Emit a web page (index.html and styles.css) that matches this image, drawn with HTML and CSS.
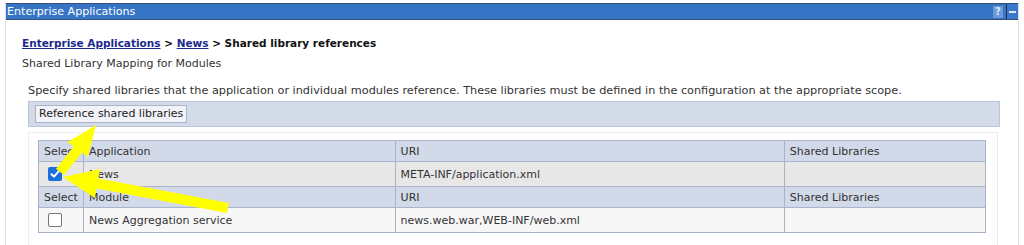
FILE: index.html
```html
<!DOCTYPE html>
<html>
<head>
<meta charset="utf-8">
<link rel="stylesheet" href="styles.css">
</head>
<body>
<div class="page">
  <div class="titlebar">
    <span class="title">Enterprise Applications</span>
    <div class="tools">
      <span class="help">?</span>
      <span class="min"></span>
    </div>
  </div>
  <div class="content">
    <div class="breadcrumb"><a href="#">Enterprise Applications</a> &gt; <a href="#">News</a> &gt; Shared library references</div>
    <div class="subtitle">Shared Library Mapping for Modules</div>
    <div class="section">
      <div class="desc">Specify shared libraries that the application or individual modules reference. These libraries must be defined in the configuration at the appropriate scope.</div>
      <div class="buttonbar"><button class="btn">Reference shared libraries</button></div>
      <div class="tablebox">
        <table class="grid">
          <colgroup><col class="c-sel"><col class="c-name"><col class="c-uri"><col class="c-lib"></colgroup>
          <tr class="head"><td>Select</td><td>Application</td><td>URI</td><td>Shared Libraries</td></tr>
          <tr class="row1"><td class="sel"><span class="cb checked"><svg viewBox="0 0 14 14" width="14" height="14"><path d="M3.5 7.2 L6 9.6 L10.6 4.4" fill="none" stroke="#fff" stroke-width="2" stroke-linecap="round" stroke-linejoin="round"/></svg></span></td><td>News</td><td>META-INF/application.xml</td><td></td></tr>
          <tr class="head"><td>Select</td><td>Module</td><td>URI</td><td>Shared Libraries</td></tr>
          <tr class="row2"><td class="sel"><span class="cb"></span></td><td>News Aggregation service</td><td>news.web.war,WEB-INF/web.xml</td><td></td></tr>
        </table>
      </div>
    </div>
  </div>
  <svg class="arrows" width="1024" height="245" viewBox="0 0 1024 245">
    <polygon fill="#ffff00" points="96,125 87.8,157 82,152.6 64,175 56,169 73.6,146.4 67.8,142"/>
    <polygon fill="#ffff00" points="63,177 100,169 98.3,178.6 228.9,203.1 227.1,212.9 96.5,188.4 94.8,198"/>
  </svg>
</div>
</body>
</html>
```
FILE: styles.css
```css
html, body {
  margin: 0;
  padding: 0;
  background: #fff;
}
body {
  font-family: "DejaVu Sans", Verdana, sans-serif;
  font-size: 11px;
  color: #222;
  height: 245px;
  overflow: hidden;
}
.page {
  position: relative;
  margin: 3px 5px 0 5px;
  height: 242px;
  overflow: hidden;
  border-left: 1px solid #e0e0e0;
  border-right: 1px solid #e0e0e0;
}
.titlebar {
  display: flex;
  align-items: center;
  justify-content: space-between;
  height: 15px;
  background: #3675c6;
  border-top: 1px solid #34507a;
  border-bottom: 1px solid #34507a;
  color: #fff;
  padding-left: 1px;
}
.title {
  font-size: 11.1px;
  line-height: 15px;
}
.tools {
  display: flex;
  height: 15px;
  align-items: center;
}
.help {
  width: 10px;
  height: 12px;
  background: #6e9bd8;
  color: #dfe9f7;
  font-weight: bold;
  font-size: 10px;
  line-height: 12px;
  text-align: center;
  margin-right: 3px;
}
.min {
  width: 11px;
  height: 15px;
  border-left: 1px solid #1d2f4d;
  background: #3a78c9;
  position: relative;
}
.min::after {
  content: "";
  position: absolute;
  left: 2px;
  top: 7px;
  width: 7px;
  height: 2px;
  background: #dfe8f5;
}
.content {
  padding: 16px 16px 0 16px;
}
.breadcrumb {
  font-weight: bold;
  font-size: 10.5px;
  color: #111;
  line-height: 14px;
}
.breadcrumb a {
  color: #1c2a8c;
}
.subtitle {
  margin-top: 7px;
  line-height: 14px;
  color: #333;
}
.section {
  margin: 13px 0 0 6px;
  width: 972px;
}
.desc {
  font-size: 11.25px;
  line-height: 13px;
  color: #333;
}
.buttonbar {
  margin-top: 4px;
  height: 24px;
  background: #d3dae8;
  border: 1px solid #b9c5da;
  display: flex;
  align-items: center;
  padding-left: 6px;
}
.btn {
  font-family: inherit;
  font-size: 11px;
  color: #222;
  background: #f1f3f8;
  border: 1px solid #aab4c6;
  border-radius: 0;
  height: 18px;
  padding: 0 3px;
  line-height: 16px;
}
.tablebox {
  margin-top: 5px;
  width: 950px;
  height: 110px;
  border: 1px solid #ececec;
  padding: 7px 9px;
}
.grid {
  width: 948px;
  border-collapse: collapse;
  border: 1px solid #a7b3c8;
}
.c-sel { width: 42px; }
.c-name { width: 313px; }
.c-uri { width: 391px; }
.c-lib { width: 202px; }
.grid td {
  border-left: 1px solid #a7b3c8;
  border-right: 1px solid #a7b3c8;
  padding: 0 5px;
  color: #333;
  white-space: nowrap;
}
.grid tr.head td {
  background: #d2d9e8;
  height: 20px;
  border-bottom: 1px solid #a9b5ca;
}
.grid tr.row1 td {
  background: #e8e7e8;
  height: 24px;
  border-bottom: 1px solid #a9b5ca;
}
.grid tr.row2 td {
  background: #f8f7f8;
  height: 24px;
}
.grid td.sel {
  padding: 0 0 0 9px;
  text-align: left;
}
.cb {
  display: inline-block;
  width: 12px;
  height: 12px;
  border: 1px solid #777;
  border-radius: 2px;
  background: #fff;
  vertical-align: middle;
  position: relative;
}
.cb.checked {
  width: 14px;
  height: 14px;
  border: none;
  background: #1a6fd8;
}
.cb svg {
  display: block;
}
.arrows {
  position: absolute;
  left: -6px;
  top: -3px;
  pointer-events: none;
}
```
